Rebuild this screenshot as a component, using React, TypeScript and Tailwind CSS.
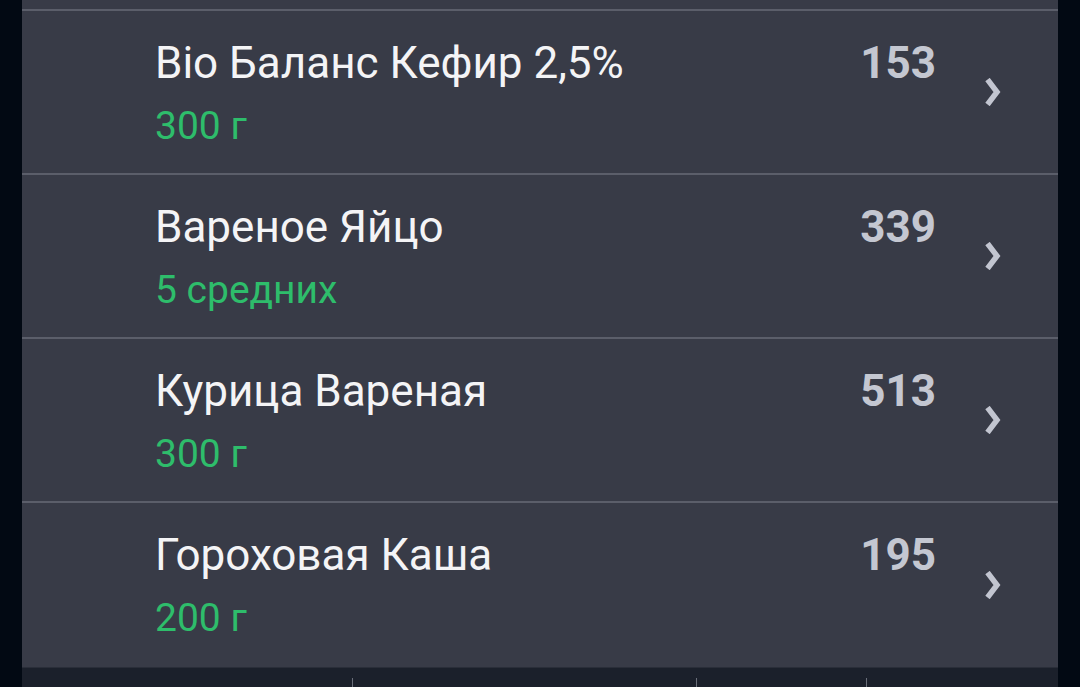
const items = [
  { name: "Bio Баланс Кефир 2,5%", amount: "300 г", kcal: "153" },
  { name: "Вареное Яйцо", amount: "5 средних", kcal: "339" },
  { name: "Курица Вареная", amount: "300 г", kcal: "513" },
  { name: "Гороховая Каша", amount: "200 г", kcal: "195" },
];

function Chevron() {
  return (
    <svg viewBox="0 0 16 28" className="w-[16px] h-[28px] shrink-0">
      <path d="M2.5 1.5 L12 14 L2.5 26.5" fill="none" stroke="#c2c5d0" strokeWidth="5.5" strokeLinejoin="miter" />
    </svg>
  );
}

function Row({ name, amount, kcal, last }: { name: string; amount: string; kcal: string; last?: boolean }) {
  return (
    <div className={`flex flex-row items-stretch h-[164px] pl-[133px] pr-[57px] ${last ? "" : "border-b-2 border-[#5b5e6a]"}`}>
      <div className="flex flex-col flex-1 pt-[25px]">
        <p className="text-[44px] leading-[54px] text-[#f4f4f6]">{name}</p>
        <p className="text-[39px] leading-[46px] mt-[13px] text-[#2ebd6b]">{amount}</p>
      </div>
      <div className="pt-[25px]">
        <p className="text-[44px] leading-[54px] font-bold text-[#c4c7d1]">{kcal}</p>
      </div>
      <div className="flex items-center pl-[49px]">
        <Chevron />
      </div>
    </div>
  );
}

export default function App() {
  return (
    <div className="w-[1080px] h-[687px] overflow-hidden bg-[#020913] flex flex-row justify-center" style={{ fontFamily: "Roboto, 'Noto Sans', sans-serif" }}>
      <div className="w-[1036px] flex flex-col">
        <div className="bg-[#383b47]">
          <div className="h-[11px] border-b-2 border-[#5b5e6a]" />
          {items.map((it, i) => (
            <Row key={i} {...it} last={i === items.length - 1} />
          ))}
        </div>
        <div className="flex-1 bg-[#1b202b] border-t border-[#2a2e39] flex flex-row pt-[10px]">
          <div className="w-[330px]" />
          <div className="w-[344px] border-l border-[#6a6e79]" />
          <div className="w-[170px] border-l border-[#6a6e79]" />
          <div className="flex-1 border-l border-[#6a6e79]" />
        </div>
      </div>
    </div>
  );
}
